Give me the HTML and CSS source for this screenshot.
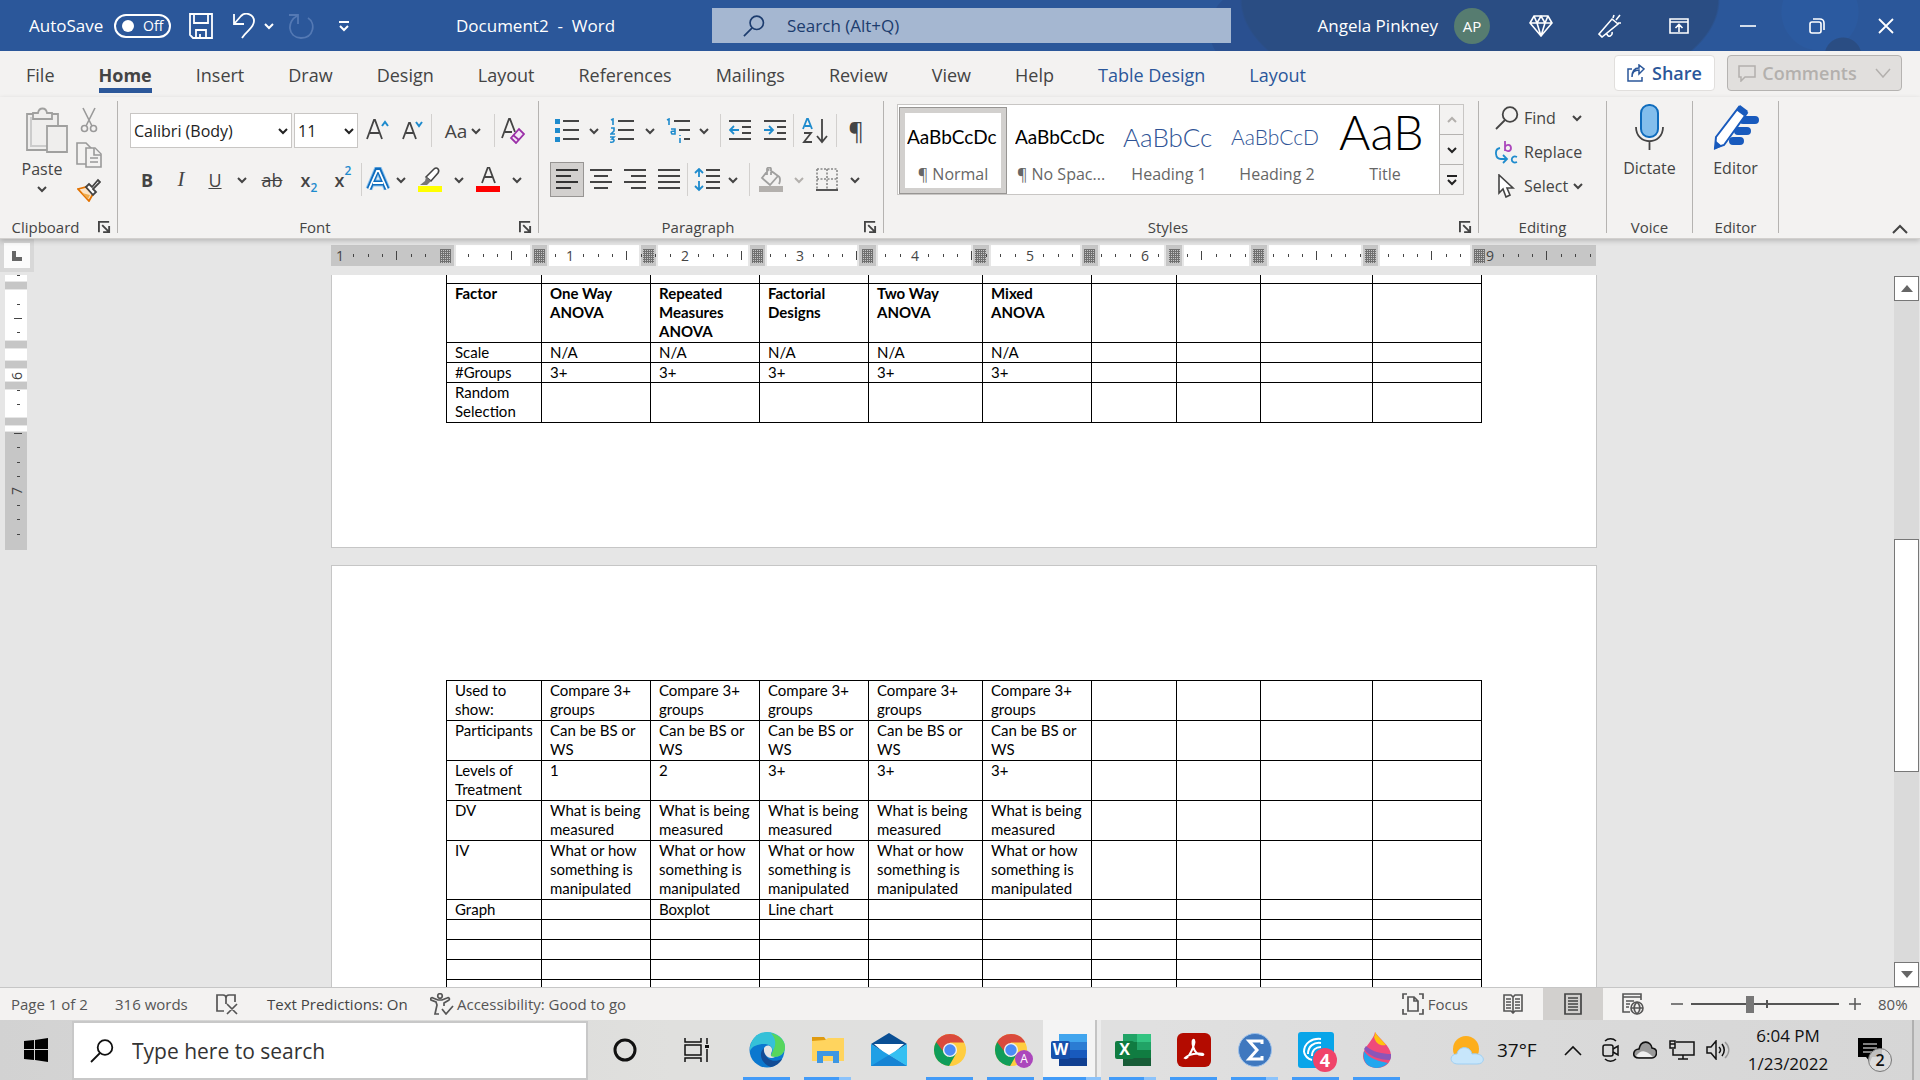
FILE: index.html
```html
<!DOCTYPE html>
<html lang="en">
<head>
<meta charset="utf-8">
<title>Document2 - Word</title>
<link rel="stylesheet" href="styles.css">
</head>
<body>
<svg class="sprite" aria-hidden="true">
  <symbol id="chev" viewBox="0 0 10 10"><path d="M1 3l4 4 4-4" fill="none" stroke="currentColor" stroke-width="2"/></symbol>
  <symbol id="launch" viewBox="0 0 14 14"><path d="M1 12V1h11M4.500 4.500l7 7M12 5.500V12H5.500" fill="none" stroke="currentColor" stroke-width="2"/></symbol>
  <symbol id="lens" viewBox="0 0 24 24"><g fill="none" stroke="currentColor" stroke-width="1.800"><circle cx="15" cy="8.500" r="7.300"/><path d="M10 14L1 23"/></g></symbol>
  <symbol id="chrome" viewBox="0 0 36 36"><circle cx="18" cy="18" r="17" fill="#ffcd40"/><path d="M18 1a17 17 0 0 1 15 9H18L10 20 3 10A17 17 0 0 1 18 1z" fill="#da4a3d"/><path d="M3.300 9.500A17 17 0 0 0 17 35l8-14-10 4z" fill="#109d59"/><circle cx="18" cy="18" r="7.500" fill="#f1f1f1"/><circle cx="18" cy="18" r="6" fill="#4c8bf5"/></symbol>
</svg>

<header class="titlebar">
  <div class="quick">
    <label class="autosave" for="autosave">AutoSave</label>
    <span class="toggle"><input type="checkbox" id="autosave"><span>Off</span></span>
    <button class="tbtn save" aria-label="Save"><svg width="24" height="26" viewBox="0 0 24 26" fill="none" stroke="#fff" stroke-width="1.800"><path d="M1 1h22v24H4l-3-3zM5 1v9h14V1M7 25v-8h10v8M11 21v4"/></svg></button>
    <button class="tbtn" aria-label="Undo"><svg width="24" height="26" viewBox="0 0 24 26" fill="none" stroke="#fff" stroke-width="1.800"><path d="M2 1v10h10M2 11L9 3c5-5 13-1 13 5 0 7-7 9-12 17"/></svg></button>
    <button class="tbtn small" aria-label="Undo list"><svg class="chev"><use href="#chev"/></svg></button>
    <button class="tbtn" aria-label="Redo"><svg width="26" height="26" viewBox="0 0 26 26" fill="none" stroke="#5479b4" stroke-width="1.800"><path d="M1 2h9v9M9 3C-1 8-1 24 13 25c13 0 15-15 7-20"/></svg></button>
    <button class="tbtn" aria-label="Customize"><svg width="12" height="12" viewBox="0 0 12 12" fill="none" stroke="#fff" stroke-width="2"><path d="M1 2h10M2 6l4 4 4-4"/></svg></button>
  </div>
  <div class="doctitle">Document2&nbsp; -&nbsp; Word</div>
  <label class="topsearch"><svg width="22" height="22"><use href="#lens"/></svg><input type="text" placeholder="Search (Alt+Q)" aria-label="Search"></label>
  <div class="account"><span>Angela Pinkney</span><span class="avatar">AP</span></div>
  <div class="winbtns">
    <button aria-label="Premium"><svg width="24" height="22" viewBox="0 0 24 22" fill="none" stroke="#fff" stroke-width="1.600"><path d="M5 1h14l4 7-11 13L1 8zM1 8h22M8 8l4 13 4-13M5 1l3 7 4-7 4 7 3-7"/></svg></button>
    <button aria-label="Coming soon"><svg width="24" height="24" viewBox="0 0 24 24" fill="none" stroke="#fff" stroke-width="1.600"><path d="M1 20L14 5l6 5L4 23zM9 20c1 4 6 2 5-2M15 4l1-3M18 6l4-5M20 9h3"/></svg></button>
    <button aria-label="Ribbon display"><svg width="20" height="16" viewBox="0 0 20 16" fill="none" stroke="#fff" stroke-width="1.600"><path d="M1 1h18v14H1zM1 4h18M10 14V7M6.500 10L10 6.500l3.500 3.500"/></svg></button>
    <button aria-label="Minimize"><svg width="16" height="16" viewBox="0 0 16 16" stroke="#fff" stroke-width="1.600"><path d="M0 8h16"/></svg></button>
    <button aria-label="Restore"><svg width="16" height="16" viewBox="0 0 16 16" fill="none" stroke="#fff" stroke-width="1.600"><rect x="1" y="4" width="11" height="11" rx="2"/><path d="M4 1h7a4 4 0 0 1 4 4v7"/></svg></button>
    <button aria-label="Close"><svg width="16" height="16" viewBox="0 0 16 16" stroke="#fff" stroke-width="1.800"><path d="M1 1l14 14M15 1L1 15"/></svg></button>
  </div>
</header>

<nav class="tabs">
  <a href="#">File</a><a href="#" class="on">Home</a><a href="#">Insert</a><a href="#">Draw</a><a href="#">Design</a><a href="#">Layout</a><a href="#">References</a><a href="#">Mailings</a><a href="#">Review</a><a href="#">View</a><a href="#">Help</a><a href="#" class="ctx">Table Design</a><a href="#" class="ctx">Layout</a>
  <div class="tabactions">
    <button class="share"><svg width="18" height="18" viewBox="0 0 18 18" fill="none" stroke="#2b579a" stroke-width="1.500"><path d="M5 5H1v12h14v-4M5 13c0-5 3-7 7-7v4l5-5-5-4v3C7 4 5 8 5 13z"/></svg>Share</button>
    <button class="comments" disabled><svg width="18" height="17" viewBox="0 0 18 17" fill="none" stroke="currentColor" stroke-width="1.500"><path d="M1 1h16v11H7l-4 4v-4H1z"/></svg>Comments<svg class="wide" width="16" height="10" viewBox="0 0 16 10" fill="none" stroke="currentColor" stroke-width="1.500"><path d="M1 1l7 8 7-8"/></svg></button>
  </div>
</nav>

<section class="ribbon">
  <div class="group clipboard">
    <div class="content cliprow">
      <button class="paste"><svg width="42" height="46" viewBox="0 0 42 46" fill="#efeeed" stroke="#a0a09f" stroke-width="1.800"><path d="M1 7h31v36H1z"/><path d="M5 10v29h20" fill="none" stroke="#ccc" stroke-width="2"/><path d="M7 6h5c1-6 8-6 9 0h5v6H7z"/><path d="M21 19h20v26H21z"/></svg>Paste<svg class="chev"><use href="#chev"/></svg></button>
      <div class="clipside">
        <button aria-label="Cut"><svg width="18" height="26" viewBox="0 0 18 26" fill="none" stroke="#999" stroke-width="1.600"><path d="M3 1l9 18M15 1L6 19"/><circle cx="4.500" cy="21.500" r="3"/><circle cx="13.500" cy="21.500" r="3"/></svg></button>
        <button aria-label="Copy"><svg width="26" height="26" viewBox="0 0 26 26" fill="#f3f2f1" stroke="#999" stroke-width="1.600"><path d="M1 1h9l5 5v16H1z"/><path d="M10 6h9l6 6v13H10z"/><path d="M18 6v7h7M14 16h8M14 20h8"/></svg></button>
        <button aria-label="Format Painter"><svg width="24" height="24" viewBox="0 0 24 24" fill="none" stroke-width="1.800"><path d="M1 11l8-2 7 7-4 7z" fill="#fbe3c6" stroke="#e37200"/><path d="M5 15l8 2-2 4z" fill="#f0ac4c"/><path d="M9 9l3-3 3 3 6-7 2 2-7 7 3 3-3 3z" fill="#fff" stroke="#444"/></svg></button>
      </div>
    </div>
    <footer><span>Clipboard</span><button aria-label="Clipboard options"><svg class="launch"><use href="#launch"/></svg></button></footer>
  </div>

  <div class="group font">
    <div class="content rows">
      <div class="row">
        <label class="combo face"><select aria-label="Font"><option>Calibri (Body)</option></select><svg class="chev"><use href="#chev"/></svg></label>
        <label class="combo size"><select aria-label="Font size"><option>11</option></select><svg class="chev"><use href="#chev"/></svg></label>
        <button class="w36" aria-label="Grow font"><svg width="24" height="24" viewBox="0 0 24 24" fill="none" stroke="#444" stroke-width="1.800"><path d="M1 20L8 1h1l7 19M4 14h9"/><path d="M16 7l3-4 3 4" stroke="#1e8bcd" stroke-width="2"/></svg></button>
        <button class="w34" aria-label="Shrink font"><svg width="22" height="24" viewBox="0 0 22 24" fill="none" stroke="#444" stroke-width="1.800"><path d="M1 20L7 4h1l6 16M4 14h7"/><path d="M14 3l3 4 3-4" stroke="#1e8bcd" stroke-width="2"/></svg></button>
        <i class="sep"></i>
        <button class="w60 aa">Aa<svg class="chev"><use href="#chev"/></svg></button>
        <i class="sep"></i>
        <button class="w34" aria-label="Clear formatting"><svg width="24" height="26" viewBox="0 0 24 26" fill="none" stroke="#444" stroke-width="1.800"><path d="M1 20L8 1h1l5 13M4 14h7"/><path d="M10 20l8-9 5 5-8 9z" fill="#f3e5f6" stroke="#9b30a8"/><path d="M12 17l6 5" stroke="#9b30a8"/></svg></button>
      </div>
      <div class="row">
        <button class="w34 bold">B</button><button class="w34 ital">I</button><button class="w34 under">U</button>
        <button class="w20" aria-label="Underline styles"><svg class="chev"><use href="#chev"/></svg></button>
        <button class="w40 strike">ab</button>
        <button class="w34 subs">x<sub>2</sub></button><button class="w34 subs">x<sup>2</sup></button>
        <i class="sep"></i>
        <button class="w30" aria-label="Text effects"><svg width="26" height="26" viewBox="0 0 26 26" fill="none"><path d="M4 22L12 3h2l8 19M8 16h10" stroke="#8fc4ef" stroke-width="7"/><path d="M4 22L12 3h2l8 19M8 16h10" stroke="#0f6cbd" stroke-width="5"/><path d="M4 22L12 4h2l8 18M8 16h10" stroke="#fff" stroke-width="1.800"/></svg></button>
        <button class="w16" aria-label="Effects list"><svg class="chev"><use href="#chev"/></svg></button>
        <button class="w42" aria-label="Highlight"><svg width="24" height="26" viewBox="0 0 24 26"><path d="M8 10l8-8c3-3 6 1 4 4l-7 8z" fill="#fff" stroke="#444" stroke-width="1.600"/><path d="M8 10l5 4-4 4H2l5-4z" fill="#777"/><path d="M0 19h24v6H0z" fill="#ff0"/></svg></button>
        <button class="w16" aria-label="Highlight colors"><svg class="chev"><use href="#chev"/></svg></button>
        <button class="w42" aria-label="Font color"><svg width="24" height="26" viewBox="0 0 24 26"><path d="M6 16L12 0h1l6 16M8 10h9" fill="none" stroke="#444" stroke-width="1.800"/><path d="M0 19h24v6H0z" fill="#f00"/></svg></button>
        <button class="w16" aria-label="Font colors"><svg class="chev"><use href="#chev"/></svg></button>
      </div>
    </div>
    <footer><span>Font</span><button aria-label="Font options"><svg class="launch"><use href="#launch"/></svg></button></footer>
  </div>

  <div class="group para">
    <div class="content rows">
      <div class="row">
        <button class="w34" aria-label="Bullets"><svg width="24" height="24" viewBox="0 0 24 24"><path d="M0 0h5v5H0zM0 9h5v5H0zM0 18h5v5H0z" fill="#1e8bcd"/><path d="M8 2h16M8 11h16M8 20h16" stroke="#444" stroke-width="1.800"/></svg></button>
        <button class="w20" aria-label="Bullet library"><svg class="chev"><use href="#chev"/></svg></button>
        <button class="w36" aria-label="Numbering"><svg width="24" height="26" viewBox="0 0 24 26"><path d="M1 2l2-1v6M1 10h3v3l-3 3h4M0 19h4l-2 2c3 0 3 4-2 3" fill="none" stroke="#1e8bcd" stroke-width="1.600"/><path d="M8 3h16M8 12h16M8 21h16" stroke="#444" stroke-width="1.800"/></svg></button>
        <button class="w20" aria-label="Numbering library"><svg class="chev"><use href="#chev"/></svg></button>
        <button class="w36" aria-label="Multilevel list"><svg width="24" height="26" viewBox="0 0 24 26"><path d="M1 2l2-1v6M5 11h4v5H6c-2-3 0-3 3-3M14 17v1M14 20v5" fill="none" stroke="#1e8bcd" stroke-width="1.600"/><path d="M8 3h16M13 12h11M18 21h6" stroke="#444" stroke-width="1.800"/></svg></button>
        <button class="w16" aria-label="Multilevel library"><svg class="chev"><use href="#chev"/></svg></button>
        <i class="sep gap"></i>
        <button class="w36" aria-label="Decrease indent"><svg width="22" height="22" viewBox="0 0 22 22" fill="none" stroke="#444" stroke-width="1.800"><path d="M0 1h22M13 7h9M13 13h9M0 19h22"/><path d="M10 10H1M5 6l-4 4 4 4" stroke="#1e8bcd"/></svg></button>
        <button class="w34" aria-label="Increase indent"><svg width="22" height="22" viewBox="0 0 22 22" fill="none" stroke="#444" stroke-width="1.800"><path d="M0 1h22M13 7h9M13 13h9M0 19h22"/><path d="M0 10h9M5 6l4 4-4 4" stroke="#1e8bcd"/></svg></button>
        <i class="sep"></i>
        <button class="w40" aria-label="Sort"><svg width="26" height="26" viewBox="0 0 26 26" fill="none" stroke="#444" stroke-width="1.800"><path d="M1 11L5 1h1l4 10M3 8h6" stroke="#1e8bcd"/><path d="M2 15h7L2 24h8M20 1v22M15 18l5 6 5-6"/></svg></button>
        <i class="sep"></i>
        <button class="w36 pilcrow">¶</button>
      </div>
      <div class="row">
        <button class="w34 sel" aria-label="Align left"><svg width="22" height="22" viewBox="0 0 22 22" stroke="#333" stroke-width="1.800"><path d="M0 1h22M0 7h15M0 13h22M0 19h15"/></svg></button>
        <button class="w34" aria-label="Center"><svg width="22" height="22" viewBox="0 0 22 22" stroke="#444" stroke-width="1.800"><path d="M0 1h22M4 7h14M0 13h22M4 19h14"/></svg></button>
        <button class="w34" aria-label="Align right"><svg width="22" height="22" viewBox="0 0 22 22" stroke="#444" stroke-width="1.800"><path d="M0 1h22M7 7h15M0 13h22M7 19h15"/></svg></button>
        <button class="w34" aria-label="Justify"><svg width="22" height="22" viewBox="0 0 22 22" stroke="#444" stroke-width="1.800"><path d="M0 1h22M0 7h22M0 13h22M0 19h22"/></svg></button>
        <i class="sep"></i>
        <button class="w36" aria-label="Line spacing"><svg width="26" height="24" viewBox="0 0 26 24" fill="none" stroke="#444" stroke-width="1.800"><path d="M12 2h14M12 8h14M12 14h14M12 20h14"/><path d="M5 9V1M1 5l4-4 4 4M5 13v9M1 18l4 4 4-4" stroke="#1e8bcd"/></svg></button>
        <button class="w16" aria-label="Line spacing list"><svg class="chev"><use href="#chev"/></svg></button>
        <i class="sep gap"></i>
        <button class="w40" aria-label="Shading"><svg width="24" height="26" viewBox="0 0 24 26" fill="none" stroke="#a0a09f" stroke-width="1.800"><path d="M10 2L3 11l8 7 8-9-8-6M8 8V2c0-2 4-2 4 0v6M19 9c3 1 2 6 1 8"/><path d="M0 19h24v6H0z" fill="#b3b0ad" stroke="none"/></svg></button>
        <button class="w16 dim" aria-label="Shading colors"><svg class="chev"><use href="#chev"/></svg></button>
        <button class="w40" aria-label="Borders"><svg width="22" height="24" viewBox="0 0 22 24" fill="none" stroke="#888" stroke-width="1.600"><path d="M1 1h20v20M1 1v20M11 1v20M1 11h20" stroke-dasharray="2 1.500"/><path d="M0 22h22" stroke="#555" stroke-width="2"/></svg></button>
        <button class="w16" aria-label="Border list"><svg class="chev"><use href="#chev"/></svg></button>
      </div>
    </div>
    <footer><span>Paragraph</span><button aria-label="Paragraph options"><svg class="launch"><use href="#launch"/></svg></button></footer>
  </div>

  <div class="group styles">
    <div class="content">
      <div class="gallery">
        <button class="style on"><span class="pv">AaBbCcDc</span><span>¶ Normal</span></button>
        <button class="style"><span class="pv">AaBbCcDc</span><span>¶ No Spac...</span></button>
        <button class="style"><span class="pv h1">AaBbCc</span><span>Heading 1</span></button>
        <button class="style"><span class="pv h2">AaBbCcD</span><span>Heading 2</span></button>
        <button class="style"><span class="pv ttl">AaB</span><span>Title</span></button>
        <div class="scroller">
          <button disabled aria-label="Previous styles"><svg class="chev up"><use href="#chev"/></svg></button>
          <button aria-label="Next styles"><svg class="chev"><use href="#chev"/></svg></button>
          <button aria-label="More styles"><svg width="12" height="12" viewBox="0 0 12 12" fill="none" stroke="#222" stroke-width="2"><path d="M1 2h10M2 6l4 4 4-4"/></svg></button>
        </div>
      </div>
    </div>
    <footer><span>Styles</span><button aria-label="Style options"><svg class="launch"><use href="#launch"/></svg></button></footer>
  </div>

  <div class="group editing">
    <div class="content edits">
      <button><svg width="24" height="24"><use href="#lens"/></svg>Find<svg class="chev far"><use href="#chev"/></svg></button>
      <button><svg width="24" height="24" viewBox="0 0 24 24" fill="none" stroke="#1e8bcd" stroke-width="1.800"><path d="M10 1v10M10 7c1-3 6-3 6 1s-5 4-6 1" stroke="#ab47bc"/><path d="M5 8c-6 1-5 11 1 11h5M8 15l4 4-4 4M22 17c-7-3-7 8 0 5"/></svg>Replace</button>
      <button><svg width="24" height="24" viewBox="0 0 24 24" fill="#fff" stroke="#444" stroke-width="1.600"><path d="M4 1v18l4-4 3 8 4-2-3-7h6z"/></svg>Select<svg class="chev"><use href="#chev"/></svg></button>
    </div>
    <footer><span>Editing</span></footer>
  </div>
  <div class="group voice">
    <div class="content"><button class="tall"><svg width="30" height="46" viewBox="0 0 30 46" fill="none"><rect x="6" y="1" width="17" height="32" rx="8" fill="#83beec" stroke="#0f6cbd" stroke-width="2"/><path d="M1 23c0 19 27 19 27 0M14.500 38v8" stroke="#444" stroke-width="1.800"/></svg>Dictate</button></div>
    <footer><span>Voice</span></footer>
  </div>
  <div class="group voice">
    <div class="content"><button class="tall"><svg width="46" height="46" viewBox="0 0 46 46"><path d="M30 16h12M25 27h9M20 37h7" stroke="#185abd" stroke-width="8" stroke-linecap="round"/><path d="M3 33L26 3l8 6-23 32-9 3z" fill="#fff" stroke="#185abd" stroke-width="2"/><path d="M23 6l4-5 8 6-4 5zM1 46l2-9 6 5z" fill="#185abd"/></svg>Editor</button></div>
    <footer><span>Editor</span></footer>
  </div>
  <button class="collapse" aria-label="Collapse ribbon"><svg width="16" height="10" viewBox="0 0 16 10" fill="none" stroke="#444" stroke-width="2"><path d="M1 9l7-7 7 7"/></svg></button>
</section>

<main class="workspace">
  <div class="corner"><span><svg width="10" height="10" viewBox="0 0 10 10"><path d="M2 0v8h8" fill="none" stroke="#666" stroke-width="4"/></svg></span></div>
  <div class="hruler">
    <svg width="1266" height="21" viewBox="331 0 1266 21">
      <defs>
        <pattern id="ticks" x="454" y="0" width="115" height="21" patternUnits="userSpaceOnUse"><path d="M14.500 9v3M29.500 9v3M43.500 9v3M57.500 6v9M72.500 9v3M86.500 9v3M101.500 9v3" stroke="#444"/></pattern>
        <pattern id="hatch" width="2" height="2" patternUnits="userSpaceOnUse"><path d="M0 0h2v2H0z" fill="#707070"/><path d="M1 1h1v1H1z" fill="#c6c6c6"/></pattern>
      </defs>
      <path d="M331 0h1265v21H331z" fill="#c6c6c6"/>
      <path d="M454 0h1018v21H454z" fill="#e6e6e6"/>
      <path d="M532 0h15v21h-15zM641 0h15v21h-15zM750 0h15v21h-15zM859 0h17v21h-17zM973 0h16v21h-16zM1082 0h16v21h-16zM1166 0h16v21h-16zM1251 0h16v21h-16zM1363 0h15v21h-15z" fill="#c6c6c6"/>
      <path d="M456 0h74v21h-74zM549 0h90v21h-90zM658 0h90v21h-90zM767 0h90v21h-90zM878 0h93v21h-93zM991 0h89v21h-89zM1100 0h64v21h-64zM1184 0h65v21h-65zM1269 0h92v21h-92zM1380 0h90v21h-90z" fill="#fff"/>
      <path d="M345 0h1251v21H345z" fill="url(#ticks)"/>
      <path d="M440 4h11v14h-11zM534 4h11v14h-11zM643 4h11v14h-11zM752 4h11v14h-11zM862 4h11v14h-11zM975 4h11v14h-11zM1084 4h11v14h-11zM1169 4h11v14h-11zM1253 4h11v14h-11zM1365 4h11v14h-11zM1474 4h11v14h-11z" fill="url(#hatch)"/>
      <g class="nums"><text x="340" y="16">1</text><text x="570" y="16">1</text><text x="685" y="16">2</text><text x="800" y="16">3</text><text x="915" y="16">4</text><text x="1030" y="16">5</text><text x="1145" y="16">6</text><text x="1490" y="16">9</text></g>
    </svg>
  </div>
  <div class="vruler">
    <svg width="22" height="275" viewBox="0 275 22 275">
      <path d="M0 275h22v6H0zM0 290h22v50H0zM0 349h22v11H0zM0 369h22v12H0zM0 390h22v27H0zM0 426h22v5H0z" fill="#fff"/>
      <path d="M0 282h22v7H0zM0 341h22v7H0zM0 361h22v7H0zM0 382h22v7H0zM0 418h22v7H0zM0 432h22v118H0z" fill="#c6c6c6"/>
      <path d="M12 275.500h3M12 304.500h3M9 318.500h8M12 332.500h3M12 390.500h3M12 404.500h3M9 433.500h8M12 447.500h3M12 462.500h3M12 476.500h3M12 505.500h3M12 519.500h3M12 534.500h3" stroke="#444"/>
      <g class="nums"><text transform="translate(17 376) rotate(-90)">6</text><text transform="translate(17 491) rotate(-90)">7</text></g>
    </svg>
  </div>
  <div class="canvas">
    <article class="page first">
      <table>
        <colgroup><col class="c1"><col class="c2"><col class="c2"><col class="c2"><col class="c3"><col class="c2"><col class="c4"><col class="c5"><col class="c6"><col class="c2"></colgroup>
        <tr class="cut"><td><td><td><td><td><td><td><td><td><td></tr>
        <tr class="l3"><th>Factor<th>One Way ANOVA<th>Repeated Measures ANOVA<th>Factorial Designs<th>Two Way ANOVA<th>Mixed ANOVA<th><th><th><th></tr>
        <tr><td>Scale<td>N/A<td>N/A<td>N/A<td>N/A<td>N/A<td><td><td><td></tr>
        <tr><td>#Groups<td>3+<td>3+<td>3+<td>3+<td>3+<td><td><td><td></tr>
        <tr class="l2"><td>Random Selection<td><td><td><td><td><td><td><td><td></tr>
      </table>
    </article>
    <article class="page second">
      <table>
        <colgroup><col class="c1"><col class="c2"><col class="c2"><col class="c2"><col class="c3"><col class="c2"><col class="c4"><col class="c5"><col class="c6"><col class="c2"></colgroup>
        <tr class="l2"><td>Used to show:<td>Compare 3+ groups<td>Compare 3+ groups<td>Compare 3+ groups<td>Compare 3+ groups<td>Compare 3+ groups<td><td><td><td></tr>
        <tr class="l2"><td>Participants<td>Can be BS or WS<td>Can be BS or WS<td>Can be BS or WS<td>Can be BS or WS<td>Can be BS or WS<td><td><td><td></tr>
        <tr class="l2"><td>Levels of Treatment<td>1<td>2<td>3+<td>3+<td>3+<td><td><td><td></tr>
        <tr class="l2"><td>DV<td>What is being measured<td>What is being measured<td>What is being measured<td>What is being measured<td>What is being measured<td><td><td><td></tr>
        <tr class="l3"><td>IV<td>What or how something is manipulated<td>What or how something is manipulated<td>What or how something is manipulated<td>What or how something is manipulated<td>What or how something is manipulated<td><td><td><td></tr>
        <tr><td>Graph<td><td>Boxplot<td>Line chart<td><td><td><td><td><td></tr>
        <tr><td><td><td><td><td><td><td><td><td><td></tr>
        <tr><td><td><td><td><td><td><td><td><td><td></tr>
        <tr><td><td><td><td><td><td><td><td><td><td></tr>
        <tr><td><td><td><td><td><td><td><td><td><td></tr>
      </table>
    </article>
  </div>
  <div class="vscroll">
    <button aria-label="Scroll up"><svg width="12" height="7" viewBox="0 0 12 7"><path d="M0 7l6-7 6 7z" fill="#666"/></svg></button>
    <div class="track"><div class="thumb"></div></div>
    <button aria-label="Scroll down"><svg width="12" height="7" viewBox="0 0 12 7"><path d="M0 0l6 7 6-7z" fill="#666"/></svg></button>
  </div>
</main>

<footer class="statusbar">
  <span class="pageno">Page 1 of 2</span>
  <span class="words">316 words</span>
  <svg class="proof" width="22" height="22" viewBox="0 0 22 22" fill="none" stroke="#555" stroke-width="1.700"><path d="M8 18H1V2h6c2 0 3 1 3 3v6M10 5c0-2 1-3 3-3h6v7M11 11l10 10M21 11L11 21"/></svg>
  <span class="predict">Text Predictions: On</span>
  <svg width="24" height="22" viewBox="0 0 24 22" fill="none" stroke="#555" stroke-width="1.700"><circle cx="10" cy="3" r="2.300"/><path d="M9 21H5l2-9-1-3-5-2c-1-2 1-3 2-2l5 2h4l5-2c2-1 3 1 2 2l-5 3v3M12 16l4 5 7-8"/></svg>
  <span class="access">Accessibility: Good to go</span>
  <div class="views">
    <button class="focus"><svg width="22" height="22" viewBox="0 0 22 22" fill="none" stroke="#555" stroke-width="1.700"><path d="M5 1H1v5M1 16v5h4M17 1h4v5M21 16v5h-4M6 4h6l4 4v10H6zM12 4v4h4"/></svg>Focus</button>
    <button class="view" aria-label="Read mode"><svg width="20" height="20" viewBox="0 0 20 20" fill="none" stroke="#555" stroke-width="1.600"><path d="M10 3L8 1H1v16h7l2 2 2-2h7V1h-7zM10 3v16M3 5h5M3 8h5M3 11h5M3 14h5M12 5h5M12 8h5M12 11h5M12 14h5"/></svg></button>
    <button class="view on" aria-label="Print layout"><svg width="18" height="22" viewBox="0 0 18 22" fill="none" stroke="#444" stroke-width="1.700"><path d="M1 1h16v20H1zM4 5h10M4 8h10M4 11h10M4 14h10M4 17h10"/></svg></button>
    <button class="view" aria-label="Web layout"><svg width="22" height="22" viewBox="0 0 22 22" fill="none" stroke="#555" stroke-width="1.600"><path d="M8 19H1V1h18v6M1 4h18M4 8h8M4 11h4M4 14h3"/><circle cx="15" cy="15" r="6"/><path d="M9 15h12M15 9c-4 4-4 8 0 12M15 9c4 4 4 8 0 12"/></svg></button>
  </div>
  <button class="zoombtn" aria-label="Zoom out"><svg width="12" height="12" viewBox="0 0 12 12" stroke="#555" stroke-width="1.500"><path d="M0 6h12"/></svg></button>
  <input class="zoom" type="range" min="0" max="100" value="39" aria-label="Zoom">
  <button class="zoombtn" aria-label="Zoom in"><svg width="12" height="12" viewBox="0 0 12 12" stroke="#555" stroke-width="1.500"><path d="M0 6h12M6 0v12"/></svg></button>
  <span class="pct">80%</span>
</footer>

<footer class="taskbar">
  <button class="start" aria-label="Start"><svg width="24" height="24" viewBox="0 0 24 24"><path d="M0 3l10-1v9H0zM11 2l13-2v11H11zM0 12h10v10L0 21zM11 12h13v12l-13-2z"/></svg></button>
  <label class="tasksearch"><svg width="24" height="24"><use href="#lens"/></svg><input type="text" placeholder="Type here to search" aria-label="Windows search"></label>
  <button class="sys" aria-label="Cortana"><svg width="24" height="24" viewBox="0 0 24 24"><circle cx="12" cy="12" r="10" fill="none" stroke="#111" stroke-width="3"/></svg></button>
  <button class="sys view2" aria-label="Task view"><svg width="26" height="24" viewBox="0 0 26 24" fill="none" stroke="#111" stroke-width="1.500"><path d="M1 0v4h16V0M1 7h16v10H1zM1 24v-4h16v4M23 0v6M23 11v13"/><path d="M21 7h4v3h-4z" fill="#111" stroke="none"/></svg></button>
  <div class="apps">
    <button class="run" aria-label="Edge"><svg width="36" height="36" viewBox="0 0 36 36"><circle cx="18" cy="18" r="17.500" fill="#0b78cf"/><path d="M1 15C3 5 10 0 18 0c10 0 18 7 18 15 0 7-6 10-11 10-4 0-3-2-2-4 2-5-2-9-8-9S3 14 1 19z" fill="#35c1d8"/><path d="M22 1c9 2 14 8 14 14 0 7-6 10-11 10-4 0-3-2-2-4 3-6 6-12-1-20z" fill="#57d65c"/><path d="M15 16c-6 5-3 16 7 19 5-1 9-4 11-8-7 4-18 2-18-11z" fill="#134c95"/><path d="M15 16c3-5 9-2 8 3-1 3-3 6 3 6-6 3-12-2-11-9z" fill="#e4e4e4"/></svg></button>
    <button class="run multi" aria-label="File Explorer"><svg width="34" height="28" viewBox="0 0 34 28"><path d="M1 1h12l3 4H1z" fill="#e09b10"/><path d="M1 5l13-1 3-2h16v23H1z" fill="#ffd45e"/><path d="M6 27V15h22v12h-6v-7H12v7z" fill="#3d97e3"/></svg></button>
    <button aria-label="Mail"><svg width="36" height="36" viewBox="0 0 36 36"><path d="M0 12L18 1l18 11-18 12z" fill="#0a4f94"/><path d="M3 12h30L18 25z" fill="#fff"/><path d="M0 12l36 22H0z" fill="#1f9fe5"/><path d="M36 12v22L18 23z" fill="#35c0f2"/><path d="M0 34l18-11 18 11z" fill="#1684d4"/></svg></button>
    <button class="run" aria-label="Chrome"><svg width="34" height="34"><use href="#chrome"/></svg></button>
    <button class="run" aria-label="Chrome profile"><svg width="34" height="34"><use href="#chrome"/></svg><span class="prof">A</span></button>
    <button class="run multi cur" aria-label="Word"><svg width="36" height="34" viewBox="0 0 36 34"><path d="M8 1h28v8H8z" fill="#41a5ee"/><path d="M8 9h28v8H8z" fill="#2b7cd3"/><path d="M8 17h28v8H8z" fill="#185abd"/><path d="M8 25h28v8H8z" fill="#103f91"/><rect y="8" width="19" height="18" rx="2" fill="#1651ac"/><text x="9.500" y="22">W</text></svg></button>
    <button class="run multi" aria-label="Excel"><svg width="36" height="34" viewBox="0 0 36 34"><path d="M8 1h14v8H8z" fill="#21a366"/><path d="M22 1h14v8H22z" fill="#33c481"/><path d="M8 9h14v8H8z" fill="#107c41"/><path d="M22 9h14v8H22z" fill="#21a366"/><path d="M8 17h28v8H8z" fill="#107c41"/><path d="M8 25h28v8H8z" fill="#185c37"/><rect y="8" width="19" height="18" rx="2" fill="#107c41"/><text x="9.500" y="22">X</text></svg></button>
    <button class="run" aria-label="Acrobat"><svg width="34" height="34" viewBox="0 0 34 34"><rect width="34" height="34" rx="6" fill="#b30b00"/><path d="M8 25c3 2 11-14 9-18-3-2-2 16 9 15 3-2-12-3-18 3z" fill="none" stroke="#fff" stroke-width="2"/></svg></button>
    <button class="run multi" aria-label="SPSS"><svg width="34" height="34" viewBox="0 0 34 34"><circle cx="17" cy="17" r="16.500" fill="#3f78bf" stroke="#9cc0ea"/><path d="M24 11V8H11l8 9-8 9h13v-3" fill="none" stroke="#fff" stroke-width="3"/></svg></button>
    <button class="run" aria-label="Support"><svg width="36" height="36" viewBox="0 0 36 36"><rect width="36" height="36" rx="3" fill="#08a5e9"/><path d="M6 20c0-9 8-14 17-13M10 22c0-8 6-12 13-11M14 24c0-6 4-9 9-9M6 20c1 4 4 7 8 8" fill="none" stroke="#fff" stroke-width="2"/></svg><span class="badge">4</span></button>
    <button class="run" aria-label="Paint 3D"><svg width="28" height="36" viewBox="0 0 28 36"><path d="M12 0c3 6 16 14 16 23 0 8-6 13-14 13S0 31 0 24C0 15 11 8 12 0z" fill="#ef4a7b"/><path d="M12 0c2 4 8 9 11 13-6 1-10-1-12-8 1-2 1-3 1-5z" fill="#ffc20e"/><path d="M3 14c6 6 17 8 25 8 0 3 0 4-1 6C16 28 6 24 1 17z" fill="#8a56b8"/><path d="M1 19c5 8 15 10 24 12-4 4-9 5-12 5C4 35-1 29 1 19z" fill="#22a7ee"/></svg></button>
  </div>
  <div class="tray">
    <svg width="34" height="30" viewBox="0 0 34 30"><circle cx="16" cy="14" r="13" fill="#fdae1c"/><path d="M8 29c-9 0-9-10-1-10 1-8 13-9 15 0 13-2 15 10 5 10z" fill="#c7e6fb" stroke="#9ecff3"/></svg>
    <span class="temp">37°F</span>
    <svg class="up1" width="18" height="11" viewBox="0 0 18 11" fill="none" stroke="#111" stroke-width="1.600"><path d="M1 10l8-8 8 8"/></svg>
    <svg class="cam" width="18" height="24" viewBox="0 0 18 24" fill="none" stroke="#111" stroke-width="1.500"><rect x="1" y="7" width="10" height="11" rx="2"/><path d="M11 11l5-3v9l-5-3M3 3c3-3 8-3 11 0M3 21c3 3 8 3 11 0"/></svg>
    <svg class="cloud" width="24" height="18" viewBox="0 0 24 18"><path d="M6 17c-8 0-6-9 0-9C8-2 18 0 19 7c7 1 5 10 0 10z" fill="#999" stroke="#111" stroke-width="1.600"/><path d="M3 15c5-7 10-6 17 1H5z" fill="#eee"/></svg>
    <svg class="net" width="26" height="20" viewBox="0 0 26 20" fill="none" stroke="#111" stroke-width="1.500"><path d="M7 2h18v13H4V9M14 15v4M9 19h10M1 1h5v7H1zM1 4h5"/></svg>
    <svg width="24" height="20" viewBox="0 0 24 20" fill="none" stroke="#111" stroke-width="1.500"><path d="M1 7h4l5-6v18l-5-6H1zM13 7c2 2 2 4 0 6M16 4c3 4 3 8 0 12"/><path d="M19 2c5 5 5 11 0 16" stroke="#999"/></svg>
    <div class="clock"><span>6:04 PM</span><span>1/23/2022</span></div>
    <div class="note"><svg width="24" height="24" viewBox="0 0 24 24"><path d="M0 0h24v19H14l-2 5-4-5H0z"/><path d="M5 6h14M5 10h14M5 14h9" stroke="#fff"/></svg><span>2</span></div>
  </div>
</footer>
</body>
</html>
```
FILE: styles.css
```css
* { box-sizing: border-box; }
html, body { height: 100%; margin: 0; }
body {
  display: flex; flex-direction: column; overflow: hidden;
  font-family: "Open Sans", "Noto Sans", sans-serif; font-size: 16px; color: #444; background: #e6e6e6;
}
button, input, select { font: inherit; color: inherit; border: 0; padding: 0; margin: 0; background: none; outline: 0; }
button { display: flex; align-items: center; justify-content: center; }
svg { display: block; flex: none; }
a { color: inherit; text-decoration: none; }
.sprite { position: absolute; width: 0; height: 0; }
.chev { width: 10px; height: 10px; }
.launch { width: 13px; height: 13px; }
.up { transform: rotate(180deg); }

/* title bar */
.titlebar {
  flex: none; height: 51px; display: flex; align-items: center; color: #fff; font-size: 17px;
  background:
    radial-gradient(circle at calc(100% - 77px) 56px, #2a4d83 18px, transparent 19px),
    radial-gradient(circle at calc(100% - 100px) 12px, #2b5aa0 38px, transparent 39px),
    radial-gradient(ellipse 240px 110px at calc(100% - 440px) 0, #2a4d83 99%, transparent),
    radial-gradient(ellipse 90px 60px at calc(100% - 520px) 20px, #2a4d83 99%, transparent),
    radial-gradient(circle at calc(100% - 670px) 30px, #2a5090 40px, transparent 41px),
    #2b579a;
}
.quick { display: flex; align-items: center; gap: 7px; width: 456px; padding-left: 29px; }
.autosave { width: 78px; }
.toggle { position: relative; width: 57px; height: 24px; border: 2px solid #fff; border-radius: 12px; font-size: 14px; line-height: 20px; padding-left: 27px; }
.toggle input { position: absolute; appearance: none; left: 6px; top: 4px; width: 12px; height: 12px; border-radius: 6px; background: #fff; }
.tbtn { width: 36px; height: 30px; }
.save { margin-left: 5px; }
.small { width: 14px; margin-left: -7px; }
.doctitle { width: 256px; white-space: nowrap; }
.topsearch { width: 519px; height: 35px; background: #a5b7d1; color: #1c3c6e; display: flex; align-items: center; gap: 22px; padding-left: 31px; }
.topsearch input { flex: 1; }
.topsearch input::placeholder { color: #1c3c6e; opacity: 1; }
.account { margin-left: auto; display: flex; align-items: center; gap: 16px; padding-right: 16px; white-space: nowrap; }
.avatar { width: 36px; height: 36px; border-radius: 50%; background: #567c70; text-align: center; line-height: 36px; font-size: 15px; }
.winbtns { display: flex; }
.winbtns button { width: 69px; height: 50px; }

/* ribbon tabs */
.tabs { flex: none; height: 46px; background: #f3f2f1; display: flex; align-items: flex-start; padding-left: 4px; font-size: 18px; }
.tabs a { padding: 11px 0 0; margin: 0 22px; height: 42px; line-height: 26px; white-space: nowrap; }
.tabs .on { font-weight: 700; border-bottom: 5px solid #2b579a; }
.tabs .ctx { color: #2b579a; }
.tabactions { margin-left: auto; display: flex; gap: 12px; padding: 4px 18px 0 0; font-weight: 600; }
.tabactions button { height: 36px; border-radius: 4px; border: 1px solid #e1dfdd; white-space: nowrap; }
.share { width: 101px; gap: 7px; background: #fff !important; color: #2b579a; }
.comments { width: 175px; gap: 6px; background: #e1dfdd !important; border-color: #b5b3b1 !important; color: #b3b0ad; }
.wide { margin-left: 12px; }

/* ribbon */
.ribbon { flex: none; height: 142px; background: #f3f2f1; display: flex; padding-top: 4px; border-bottom: 1px solid #d2d0ce; position: relative; z-index: 1; box-shadow: 0 2px 5px #0003; }
.group { flex: none; height: 132px; border-right: 1px solid #b5b3b1; display: flex; flex-direction: column; }
.group .content { flex: 1; }
.group footer { height: 22px; display: flex; align-items: center; font-size: 15px; margin-bottom: -5px; align-self: stretch; }
.group footer span { flex: 1; text-align: center; }
.group footer button { width: 26px; }
.clipboard { width: 118px; } .font { width: 421px; } .para { width: 345px; }
.styles { width: 595px; } .editing { width: 128px; } .voice { width: 86px; }
.cliprow { display: flex; padding: 6px 0 0 18px; gap: 10px; }
.paste { flex-direction: column; width: 48px; height: 92px; justify-content: flex-start; }
.paste .chev { margin-top: 4px; }
.paste svg:first-child { margin: 0 0 5px 10px; }
.clipside { display: flex; flex-direction: column; gap: 9px; }
.clipside button { width: 26px; height: 26px; }
.rows { display: flex; flex-direction: column; gap: 14px; padding: 12px 0 0 12px; }
.para .rows { padding-left: 11px; }
.row { display: flex; height: 35px; align-items: stretch; }
.sep { width: 1px; margin: 1px 1px; background: #d2d0ce; }
.gap { margin-left: 8px; }
.w16 { width: 16px; } .w20 { width: 20px; } .w30 { width: 30px; } .w34 { width: 34px; } .w36 { width: 36px; } .w40 { width: 40px; } .w42 { width: 42px; } .w60 { width: 60px; }
.combo { display: grid; align-items: center; background: #fff; border: 1px solid #c8c6c4; margin-right: 2px; color: #222; }
.combo select { grid-area: 1 / 1; appearance: none; padding-left: 3px; width: 100%; }
.combo .chev { grid-area: 1 / 1; justify-self: end; margin-right: 3px; }
.face { width: 162px; } .size { width: 64px; }
.aa { font-size: 19px; gap: 4px; }
.bold { font-weight: 700; font-size: 18px; }
.ital { font-family: "Liberation Serif", serif; font-style: italic; font-size: 21px; }
.under { text-decoration: underline; font-size: 18px; }
.strike { text-decoration: line-through; font-size: 18px; }
.subs { font-size: 18px; font-weight: 600; align-items: center; }
.subs sub, .subs sup { font-size: 12px; color: #1e8bcd; line-height: 12px; }
.subs sub { padding-top: 16px; } .subs sup { padding-bottom: 18px; }
.pilcrow { font-size: 24px; }
.sel { background: #d2d0ce; border: 1px solid #979593; }
.dim { color: #b3b0ad; }

.styles .content { padding: 3px 0 0 13px; }
.gallery { width: 567px; height: 91px; background: #fff; border: 1px solid #c8c6c4; display: flex; padding-left: 1px; }
.style { width: 108px; height: 87px; margin-top: 2px; flex-direction: column; justify-content: flex-start; border: 1px solid transparent; color: #666; padding: 7px 8px 0; overflow: hidden; white-space: nowrap; }
.style.on { border-color: #979593; box-shadow: inset 0 0 0 5px #d2d0ce; }
.pv { font-family: Lato, sans-serif; font-size: 19px; color: #000; width: 92px; height: 48px; line-height: 44px; overflow: hidden; text-align: left; }
.pv.h1 { font-size: 26px; font-weight: 300; color: #2f5496; }
.pv.h2 { font-size: 21px; font-weight: 300; color: #2f5496; }
.pv.ttl { font-size: 48px; font-weight: 300; line-height: 34px; }
.scroller { margin-left: auto; width: 24px; display: flex; flex-direction: column; background: #f3f2f1; }
.scroller button { flex: 1; border: 1px solid #b5b3b1; border-width: 0 0 1px 1px; color: #222; }
.scroller button:disabled { color: #b3b0ad; }
.scroller button:last-child { border-bottom: 0; }

.edits { display: flex; flex-direction: column; padding: 0 0 0 16px; }
.edits button { height: 34px; justify-content: flex-start; gap: 5px; }
.edits .far { margin-left: 11px; }
.tall { width: 100%; flex-direction: column; padding-top: 3px; gap: 7px; }
.collapse { margin: 120px 12px 0 auto; height: 16px; }

/* workspace */
.workspace { flex: 1; min-height: 0; display: grid; grid-template: 36px minmax(0, 1fr) / 34px minmax(0, 1fr) 26px; border-bottom: 1px solid #c6c6c6; }
.corner { background: #d8d8d8; height: 33px; }
.corner span { display: grid; place-items: center; margin: 4px; width: 26px; height: 25px; background: #fbfbfb; }
.hruler { display: flex; justify-content: center; padding-top: 6px; grid-column: 2 / 3; }
.nums { font-size: 14px; fill: #444; text-anchor: middle; }
.vruler { grid-row: 2; padding-left: 5px; }
.canvas { grid-row: 2; grid-column: 2; display: flex; flex-direction: column; align-items: center; gap: 17px; overflow: hidden; }
.page { flex: none; width: 1266px; background: #fff; border: 1px solid #c6c6c6; padding-left: 114px; }
.first { min-height: 273px; border-top: 0; }
.second { min-height: 900px; padding-top: 114px; }
table { border-collapse: collapse; table-layout: fixed; width: 1036px; font-family: Lato, sans-serif; font-size: 15px; line-height: 19px; color: #000; }
.c1 { width: 95px; } .c2 { width: 109px; } .c3 { width: 114px; } .c4 { width: 85px; } .c5 { width: 84px; } .c6 { width: 112px; }
tr { height: 20px; }
.l2 { height: 40px; } .l3 { height: 59px; }
.cut { height: 8px; }
td, th { border: 1px solid #000; padding: 0 6px 0 8px; vertical-align: top; text-align: left; }
.cut td { border-top: 0; }

.vscroll { grid-row: 2; grid-column: 3; display: flex; flex-direction: column; width: 25px; padding-top: 1px; }
.vscroll button { height: 25px; background: #fff; border: 1px solid #777; }
.track { flex: 1; padding-top: 238px; background: #dadada; }
.thumb { height: 233px; background: #fff; border: 1px solid #777; }

/* status bar */
.statusbar { flex: none; height: 32px; background: #f3f2f1; display: flex; align-items: center; padding: 0 11px; font-size: 15px; white-space: nowrap; color: #555; }
.pageno { width: 104px; } .words { width: 101px; } .proof { margin-right: 29px; }
.predict { width: 163px; color: #444; } .access { margin-left: 3px; }
.views { margin-left: auto; display: flex; height: 32px; }
.focus { gap: 4px; margin-right: 15px; }
.view { width: 60px; }
.view.on { background: #d2d0ce; }
.zoombtn { width: 28px; }
.zoom { appearance: none; width: 148px; height: 18px; margin: 0 2px 0 0; background: linear-gradient(#555, #555) 75px 50% / 2px 8px no-repeat, linear-gradient(#555, #555) 0 50% / 100% 2px no-repeat; }
.zoom::-webkit-slider-thumb { appearance: none; width: 8px; height: 17px; background: #777; }
.pct { width: 40px; padding-left: 9px; }

/* taskbar */
.taskbar { flex: none; height: 60px; background: linear-gradient(90deg, #d2d2d2, #e0e0de 35%, #e0e0e0 60%, #dadada 80%, #d6d6d6); display: flex; color: #111; }
.start { width: 72px; }
.tasksearch { width: 516px; height: 59px; margin-top: 1px; background: #fff; border: 2px solid #c8c8c8; display: flex; align-items: center; gap: 18px; padding-left: 16px; font-size: 21px; color: #111; }
.tasksearch input { flex: 1; }
.tasksearch input::placeholder { color: #333; opacity: 1; }
.sys { width: 73px; }
.view2 { width: 75px; padding-right: 4px; }
.apps { display: flex; }
.apps button { position: relative; width: 61px; padding-bottom: 1px; }
.apps text { font: 700 16px "Open Sans", sans-serif; fill: #fff; text-anchor: middle; }
.run::after { content: ""; position: absolute; left: 7px; bottom: 0; width: 47px; height: 3px; background: #429bf8; }
.multi::after { background: linear-gradient(90deg, #429bf8 75%, #8cc3fb 75%); }
.apps .cur { padding-right: 6px; background: linear-gradient(90deg, transparent 2px, #f4f4f4 2px 54px, #c4c4c4 54px 56px, #ececec 56px 60px, transparent 60px); }
.cur::after { left: 2px; width: 58px; }
.prof, .badge { position: absolute; border-radius: 50%; color: #fff; text-align: center; }
.prof { left: 35px; top: 30px; width: 18px; height: 18px; line-height: 18px; font-size: 12px; background: #ab47bc; }
.badge { left: 28px; top: 28px; width: 24px; height: 24px; line-height: 24px; font-size: 18px; font-weight: 700; background: #f0446a; }
.tray { margin-left: auto; display: flex; align-items: center; padding-right: 6px; border-right: 2px solid #b0b0b0; margin-right: 6px; white-space: nowrap; }
.temp { width: 67px; margin-left: 13px; font-size: 19px; }
.up1 { margin-right: 20px; } .cam { margin-right: 13px; } .cloud { margin-right: 12px; } .net { margin-right: 11px; }
.clock { width: 116px; display: flex; flex-direction: column; align-items: center; font-size: 17px; line-height: 28px; }
.note { position: relative; width: 60px; padding-left: 12px; height: 24px; }
.note span { position: absolute; left: 22px; top: 10px; width: 24px; height: 24px; border: 1px solid #777; border-radius: 50%; background: #dcdcdcdd; text-align: center; line-height: 22px; font-size: 16px; font-weight: 600; }
```
